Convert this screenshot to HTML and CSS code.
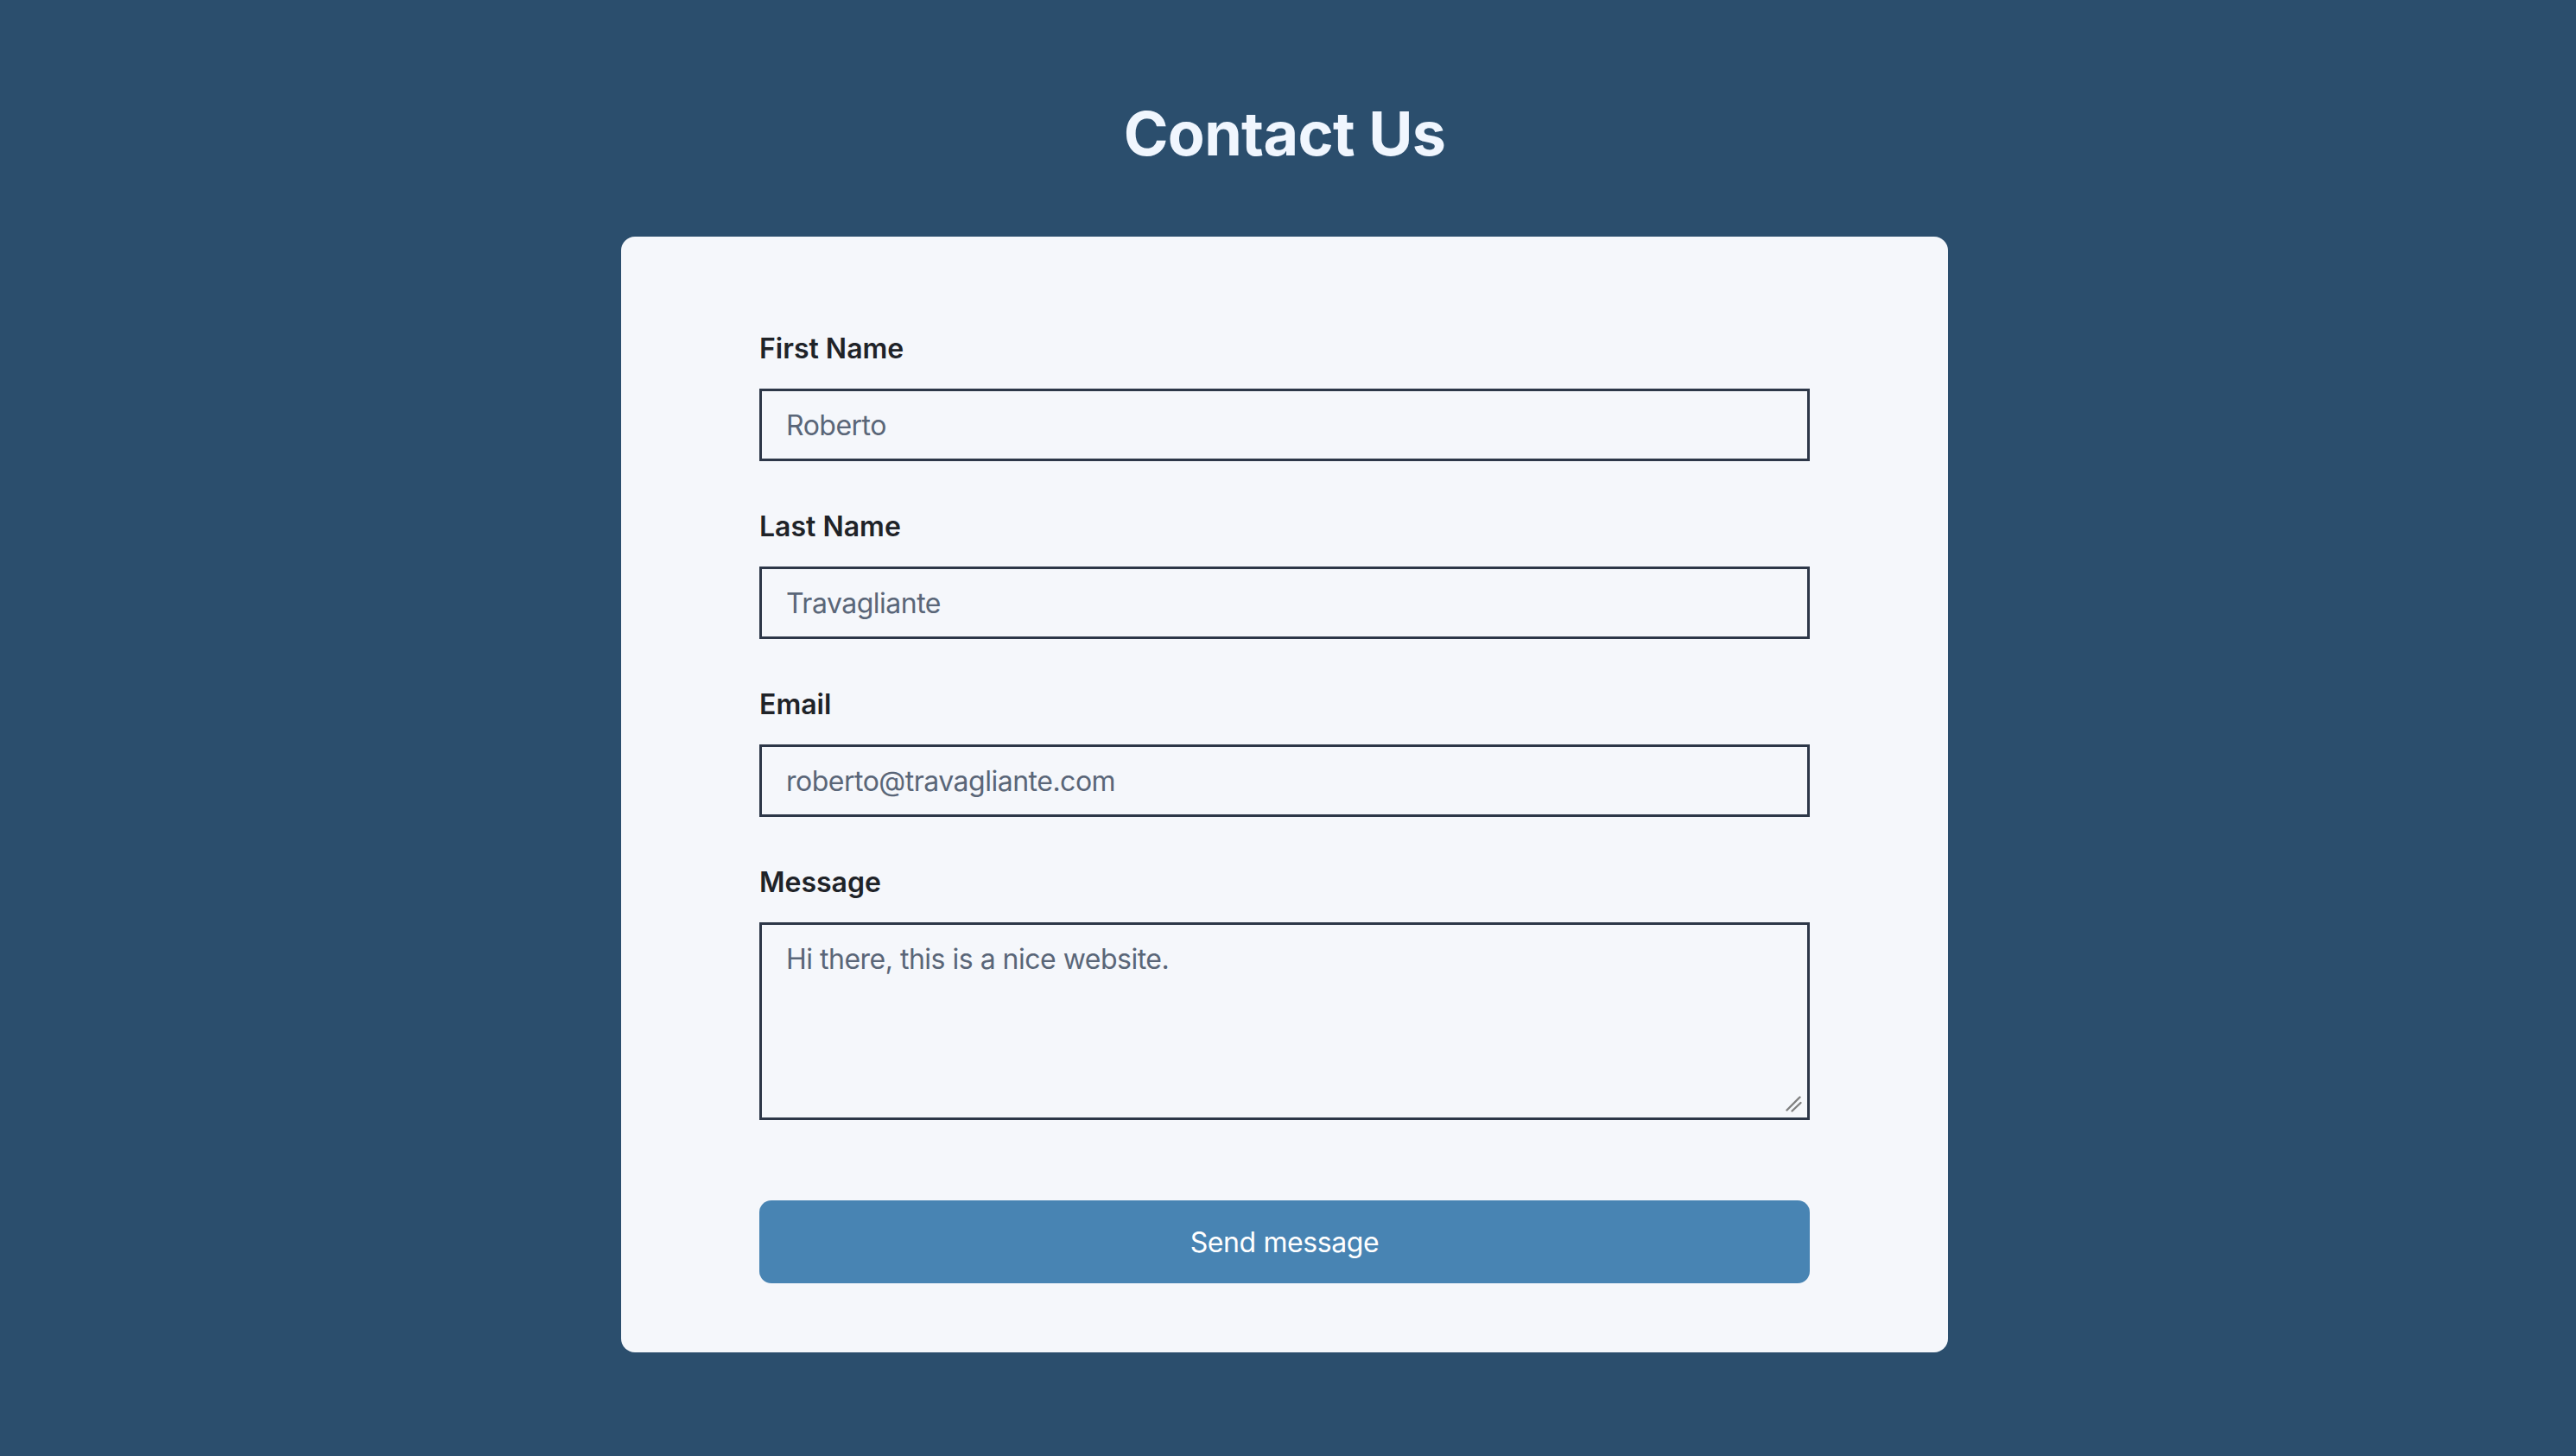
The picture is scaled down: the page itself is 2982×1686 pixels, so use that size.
FILE: index.html
```html
<!DOCTYPE html>
<html lang="en">
<head>
<meta charset="utf-8">
<title>Contact Us</title>
<link rel="stylesheet" href="styles.css">
</head>
<body>
<main class="page">
  <h1 class="title">Contact Us</h1>
  <form class="card" onsubmit="return false">
    <div class="field">
      <label class="label" for="first">First Name</label>
      <input class="input" id="first" type="text" value="Roberto">
    </div>
    <div class="field">
      <label class="label" for="last">Last Name</label>
      <input class="input" id="last" type="text" value="Travagliante">
    </div>
    <div class="field">
      <label class="label" for="email">Email</label>
      <input class="input" id="email" type="email" value="roberto@travagliante.com">
    </div>
    <div class="field field-message">
      <label class="label" for="message">Message</label>
      <div class="textarea-wrap">
        <textarea class="input textarea" id="message">Hi there, this is a nice website.</textarea>
        <svg class="grip" viewBox="0 0 30 30" width="30" height="30" aria-hidden="true">
          <line x1="3.5" y1="18.5" x2="18.5" y2="3.5"/>
          <line x1="9.5" y1="19.5" x2="19.5" y2="10"/>
        </svg>
      </div>
    </div>
    <button class="submit" type="submit">Send message</button>
  </form>
</main>
</body>
</html>
```

FILE: styles.css
```css
html, body {
  margin: 0;
  padding: 0;
  background: #2b4e6d;
}

body {
  font-family: Inter, "Noto Sans", "Liberation Sans", sans-serif;
  min-height: 100vh;
}

.page {
  display: flex;
  flex-direction: column;
  align-items: center;
  padding: 120px 8px 80px 0;
}

.title {
  margin: 0 0 84px;
  font-size: 70px;
  line-height: 70px;
  font-weight: 700;
  letter-spacing: -0.6px;
  color: #f0f6fe;
}

.card {
  box-sizing: border-box;
  width: 1536px;
  padding: 110px 160px 80px;
  background: #f5f7fb;
  border-radius: 16px;
  display: flex;
  flex-direction: column;
}

.field {
  display: flex;
  flex-direction: column;
  gap: 26px;
  margin-bottom: 56px;
}

.field-message {
  margin-bottom: 93px;
}

.label {
  font-size: 32px;
  line-height: 40px;
  font-weight: 600;
  color: #1f2328;
}

.input {
  box-sizing: border-box;
  display: block;
  width: 100%;
  height: 84px;
  margin: 0;
  padding: 0 28px;
  border: 3px solid #2d3748;
  border-radius: 0;
  background: #f5f7fb;
  font-family: inherit;
  font-size: 32px;
  letter-spacing: -0.5px;
  color: #5a6678;
  outline: none;
}

.textarea-wrap {
  position: relative;
}

.textarea {
  height: 229px;
  padding: 16px 28px;
  line-height: 48px;
  resize: none;
}

/* drag handle drawn in the bottom-right corner of the message box */
.grip {
  position: absolute;
  right: 0;
  bottom: 0;
  pointer-events: none;
}

.grip line {
  stroke: #808080;
  stroke-width: 2.4;
  stroke-linecap: round;
}

.submit {
  box-sizing: border-box;
  width: 100%;
  height: 96px;
  margin: 0;
  border: 0;
  border-radius: 14px;
  background: #4884b3;
  color: #ffffff;
  font-family: inherit;
  font-size: 32px;
  font-weight: 400;
  letter-spacing: -0.4px;
  cursor: pointer;
}
```
